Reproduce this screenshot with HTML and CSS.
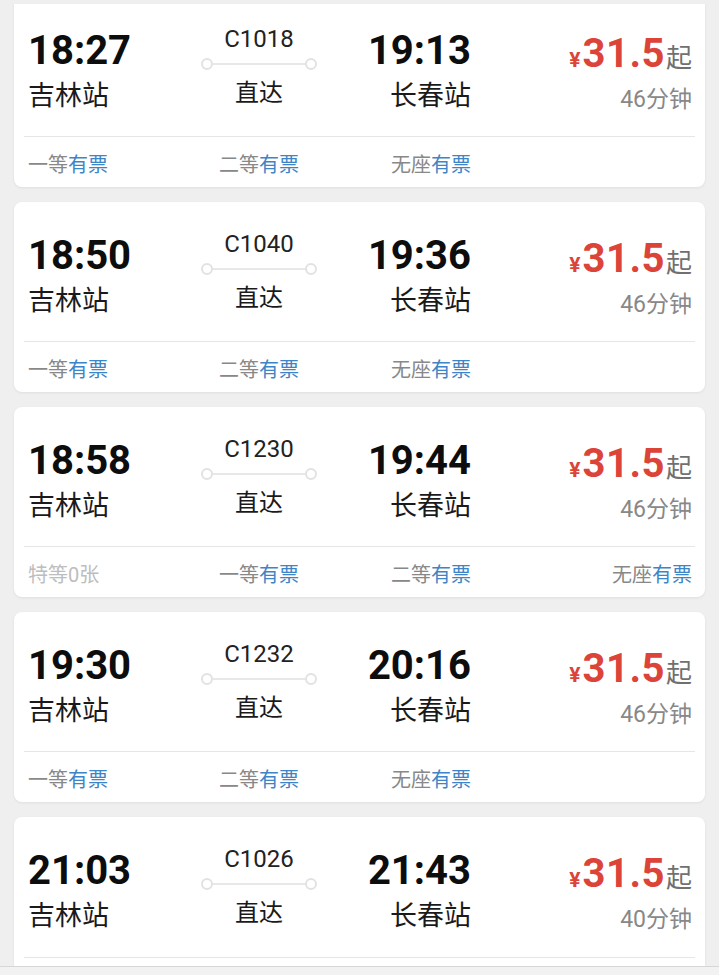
FILE: index.html
```html
<!DOCTYPE html>
<html lang="zh-CN">
<head>
    <meta charset="UTF-8">
    <title>吉林 - 长春</title>
    <link rel="stylesheet" href="styles.css">
</head>
<body>
    <div class="top-edge"></div>
    <div class="list">
        <div class="card">
            <div class="main">
                <div class="col dep">
                    <div class="time">18:27</div>
                    <div class="station">吉林站</div>
                </div>
                <div class="col train">
                    <div class="code">C1018</div>
                    <div class="track"><span class="dot"></span><span class="rail"></span><span class="dot"></span></div>
                    <div class="direct">直达</div>
                </div>
                <div class="col arr">
                    <div class="time">19:13</div>
                    <div class="station">长春站</div>
                </div>
                <div class="col fare">
                    <div class="price"><span class="yen">¥</span>31.5<span class="from">起</span></div>
                    <div class="dur">46分钟</div>
                </div>
            </div>
            <div class="seats">
                <div class="seat s1">一等<em>有票</em></div>
                <div class="seat s2">二等<em>有票</em></div>
                <div class="seat s3">无座<em>有票</em></div>
            </div>
        </div>

        <div class="card">
            <div class="main">
                <div class="col dep">
                    <div class="time">18:50</div>
                    <div class="station">吉林站</div>
                </div>
                <div class="col train">
                    <div class="code">C1040</div>
                    <div class="track"><span class="dot"></span><span class="rail"></span><span class="dot"></span></div>
                    <div class="direct">直达</div>
                </div>
                <div class="col arr">
                    <div class="time">19:36</div>
                    <div class="station">长春站</div>
                </div>
                <div class="col fare">
                    <div class="price"><span class="yen">¥</span>31.5<span class="from">起</span></div>
                    <div class="dur">46分钟</div>
                </div>
            </div>
            <div class="seats">
                <div class="seat s1">一等<em>有票</em></div>
                <div class="seat s2">二等<em>有票</em></div>
                <div class="seat s3">无座<em>有票</em></div>
            </div>
        </div>

        <div class="card">
            <div class="main">
                <div class="col dep">
                    <div class="time">18:58</div>
                    <div class="station">吉林站</div>
                </div>
                <div class="col train">
                    <div class="code">C1230</div>
                    <div class="track"><span class="dot"></span><span class="rail"></span><span class="dot"></span></div>
                    <div class="direct">直达</div>
                </div>
                <div class="col arr">
                    <div class="time">19:44</div>
                    <div class="station">长春站</div>
                </div>
                <div class="col fare">
                    <div class="price"><span class="yen">¥</span>31.5<span class="from">起</span></div>
                    <div class="dur">46分钟</div>
                </div>
            </div>
            <div class="seats">
                <div class="seat s1 none">特等0张</div>
                <div class="seat s2">一等<em>有票</em></div>
                <div class="seat s3">二等<em>有票</em></div>
                <div class="seat s4">无座<em>有票</em></div>
            </div>
        </div>

        <div class="card">
            <div class="main">
                <div class="col dep">
                    <div class="time">19:30</div>
                    <div class="station">吉林站</div>
                </div>
                <div class="col train">
                    <div class="code">C1232</div>
                    <div class="track"><span class="dot"></span><span class="rail"></span><span class="dot"></span></div>
                    <div class="direct">直达</div>
                </div>
                <div class="col arr">
                    <div class="time">20:16</div>
                    <div class="station">长春站</div>
                </div>
                <div class="col fare">
                    <div class="price"><span class="yen">¥</span>31.5<span class="from">起</span></div>
                    <div class="dur">46分钟</div>
                </div>
            </div>
            <div class="seats">
                <div class="seat s1">一等<em>有票</em></div>
                <div class="seat s2">二等<em>有票</em></div>
                <div class="seat s3">无座<em>有票</em></div>
            </div>
        </div>

        <div class="card">
            <div class="main">
                <div class="col dep">
                    <div class="time">21:03</div>
                    <div class="station">吉林站</div>
                </div>
                <div class="col train">
                    <div class="code">C1026</div>
                    <div class="track"><span class="dot"></span><span class="rail"></span><span class="dot"></span></div>
                    <div class="direct">直达</div>
                </div>
                <div class="col arr">
                    <div class="time">21:43</div>
                    <div class="station">长春站</div>
                </div>
                <div class="col fare">
                    <div class="price"><span class="yen">¥</span>31.5<span class="from">起</span></div>
                    <div class="dur">40分钟</div>
                </div>
            </div>
            <!-- seat row of the last card is below the fold -->
            <div class="seats"></div>
        </div>
    </div>
    <div class="bottom-edge"></div>
</body>
</html>
```

FILE: styles.css
```css
body { margin: 0; background: #efefef; font-family: Roboto, "Noto Sans CJK SC", sans-serif; color: #111; }
.top-edge { position: fixed; top: 0; left: 0; right: 0; height: 4px; background: #efefef; z-index: 2; }
.bottom-edge { position: fixed; bottom: 0; left: 0; right: 0; height: 8px; background: #f2f2f2; border-top: 1px solid #d6d6d6; z-index: 2; }
.list { display: flex; flex-direction: column; gap: 15px; margin-top: -3px; padding: 0 14px; }
.card { height: 190px; background: #fff; border-radius: 8px; box-shadow: 0 1px 3px rgba(0,0,0,0.07); padding: 0 10px; box-sizing: border-box; display: flex; flex-direction: column; }
.main, .seats { display: grid; grid-template-columns: 152px 158px 133px 1fr; padding: 0 3px 0 4px; }
.main { height: 141px; border-bottom: 1px solid #e6e6e6; box-sizing: border-box; }
.col { display: flex; flex-direction: column; }
.dep { align-items: flex-start; }
.train { align-items: center; }
.arr, .fare { align-items: flex-end; }
.time { font-size: 40px; font-weight: 700; line-height: 46px; margin-top: 31px; color: #0d0d0d; }
.station { font-size: 27px; line-height: 34px; margin-top: 5px; color: #1a1a1a; }
.code { font-size: 24px; line-height: 28px; margin-top: 28px; color: #222; }
.track { display: flex; align-items: center; width: 116px; height: 12px; margin-top: 5px; }
.dot { width: 8px; height: 8px; border: 2px solid #e2e2e2; border-radius: 50%; background: #fff; }
.rail { flex: 1; height: 2px; background: #e8e8e8; }
.direct { font-size: 24px; line-height: 30px; margin-top: 8px; color: #1a1a1a; }
.price { font-size: 40px; font-weight: 700; line-height: 44px; margin-top: 35px; color: #dc4339; letter-spacing: 0.5px; }
.yen { font-size: 21px; margin-right: 2px; letter-spacing: 0; }
.from { font-size: 26px; font-weight: 400; color: #707070; margin-left: 1px; letter-spacing: 0; }
.dur { font-size: 23px; line-height: 30px; margin-top: 3px; color: #888; }
.seats { padding-top: 6px; }
.seat { font-size: 20px; line-height: 44px; color: #888; }
.seat em { font-style: normal; color: #3d85c6; }
.seat.none { color: #bdbdbd; }
.s1 { justify-self: start; }
.s2 { justify-self: center; }
.s3, .s4 { justify-self: end; }
```
